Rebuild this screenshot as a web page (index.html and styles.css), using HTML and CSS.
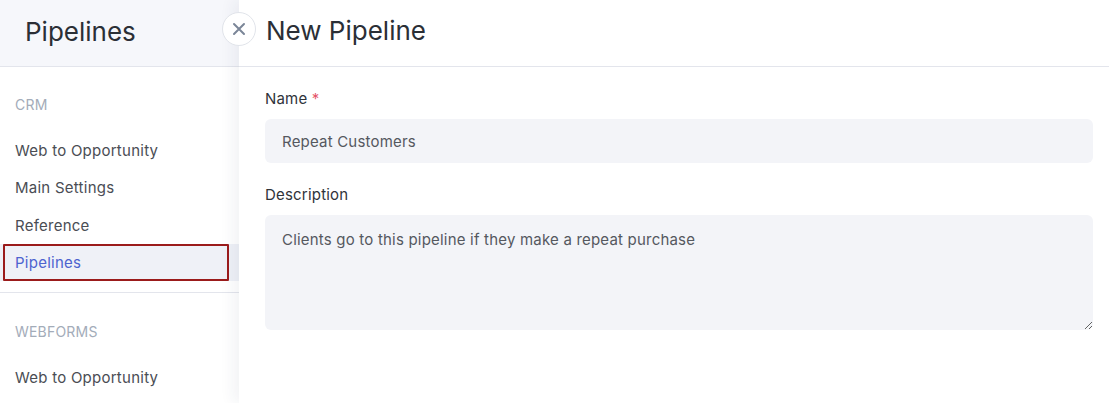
FILE: index.html
```html
<!DOCTYPE html>
<html>
<head>
<meta charset="utf-8">
<link rel="stylesheet" href="styles.css">
</head>
<body>
<div class="app">
  <aside class="sidebar">
    <div class="side-head"><h1 class="side-title">Pipelines</h1></div>
    <div class="group">
      <div class="group-label">CRM</div>
      <a class="item">Web to Opportunity</a>
      <a class="item">Main Settings</a>
      <a class="item">Reference</a>
      <a class="item active">Pipelines</a>
    </div>
    <div class="group group-sep">
      <div class="group-label">WEBFORMS</div>
      <a class="item">Web to Opportunity</a>
    </div>
  </aside>
  <main class="panel">
    <button class="close" aria-label="Close">
      <svg width="16" height="16" viewBox="0 0 16 16"><path d="M3 3L13 13M13 3L3 13" stroke="#7b8698" stroke-width="2" stroke-linecap="round" fill="none"/></svg>
    </button>
    <div class="panel-head"><h2 class="panel-title">New Pipeline</h2></div>
    <form class="form">
      <div class="field">
        <label class="label">Name <span class="req">*</span></label>
        <input class="input" type="text" value="Repeat Customers">
      </div>
      <div class="field">
        <label class="label">Description</label>
        <textarea class="textarea">Clients go to this pipeline if they make a repeat purchase</textarea>
      </div>
    </form>
  </main>
</div>
</body>
</html>
```
FILE: styles.css
```css
*, *::before, *::after { box-sizing: border-box; }
html, body { margin: 0; height: 100%; }
body {
  font-family: Inter, "Noto Sans", sans-serif;
  background: #fff;
  color: #333;
  overflow: hidden;
}
.app { display: flex; height: 403px; }
.sidebar {
  width: 239px;
  flex: 0 0 239px;
  background: #fff;
}
.side-head {
  height: 67px;
  background: #f6f7fb;
  border-bottom: 1px solid #e3e5ec;
  display: flex;
  align-items: center;
  padding-left: 25px;
}
.side-title {
  margin: 0;
  font-size: 26px;
  font-weight: 400;
  color: #2b2f36;
  padding-bottom: 3px;
}
.group { padding-top: 27px; padding-bottom: 11px; }
.group-sep { border-top: 1px solid #e3e5ec; padding-top: 28px; }
.group-label {
  font-size: 14px;
  color: #a3acb9;
  padding-left: 15px;
  height: 22px;
  line-height: 22px;
  margin-bottom: 16px;
  letter-spacing: 0.2px;
}
.item {
  display: block;
  font-size: 15px;
  color: #4a4d54;
  padding-left: 15px;
  height: 37.33px;
  line-height: 37px;
  letter-spacing: 0.25px;
}
.active {
  background: #eff1f7;
  color: #4d63cf;
  position: relative;
}
.active::after {
  content: "";
  position: absolute;
  left: 3px;
  top: 0;
  width: 226px;
  height: 37px;
  border: 2px solid #9b1b1b;
  border-radius: 1px;
}
.panel {
  flex: 1;
  position: relative;
  background: #fff;
  box-shadow: -6px 0 14px rgba(40, 50, 80, 0.06);
}
.close {
  position: absolute;
  left: -17px;
  top: 12px;
  width: 34px;
  height: 34px;
  border-radius: 50%;
  border: 1px solid #e1e4ea;
  background: #fff;
  display: flex;
  align-items: center;
  justify-content: center;
  padding: 0;
}
.panel-head {
  height: 67px;
  border-bottom: 1px solid #e3e5ec;
  padding-left: 27px;
  display: flex;
  align-items: center;
}
.panel-title {
  margin: 0;
  font-size: 26px;
  font-weight: 400;
  color: #2b2f36;
  padding-bottom: 5px;
}
.form { padding: 21px 16px 0 26px; }
.field { margin-bottom: 21px; }
.label {
  display: block;
  font-size: 15px;
  font-weight: 400;
  color: #2f333a;
  line-height: 22px;
  margin-bottom: 9px;
  letter-spacing: 0.2px;
}
.req { color: #e5566b; }
.input, .textarea {
  display: block;
  width: 100%;
  border: none;
  background: #f3f4f8;
  border-radius: 6px;
  font-family: Inter, "Noto Sans", sans-serif;
  font-size: 15px;
  color: #55585f;
  padding: 0 17px;
  outline: none;
  letter-spacing: 0.2px;
}
.input { height: 44px; }
.textarea {
  height: 115px;
  padding-top: 15px;
  line-height: 20px;
  resize: vertical;
}
```
